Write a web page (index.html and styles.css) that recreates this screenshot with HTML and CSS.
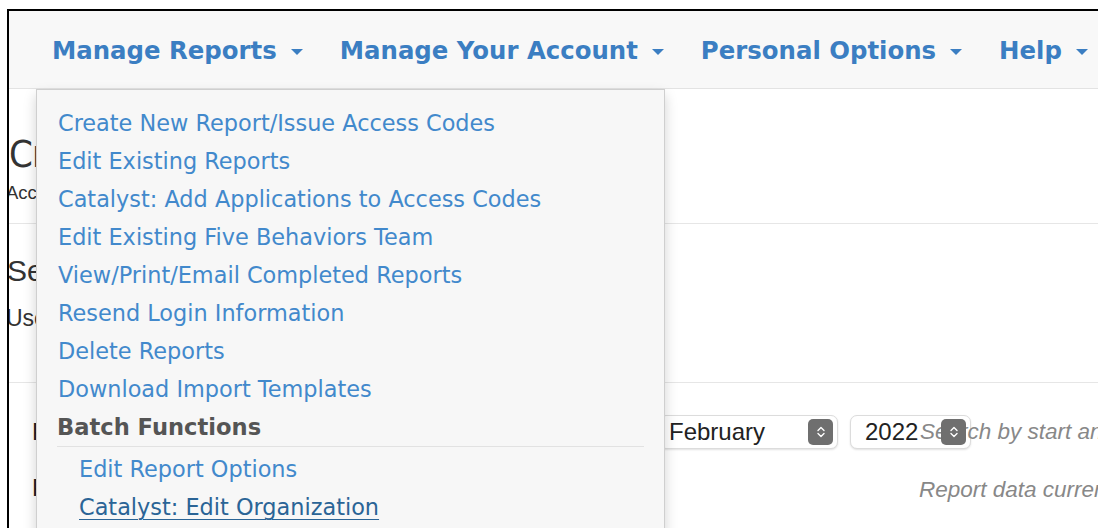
FILE: index.html
```html
<!DOCTYPE html>
<html lang="en">
<head>
<meta charset="utf-8">
<title>Manage Reports</title>
<link rel="stylesheet" href="styles.css">
</head>
<body>
<div class="frame">
  <nav class="navbar">
    <a class="nav-link">Manage Reports <span class="caret"></span></a>
    <a class="nav-link">Manage Your Account <span class="caret"></span></a>
    <a class="nav-link">Personal Options <span class="caret"></span></a>
    <a class="nav-link">Help <span class="caret"></span></a>
  </nav>

  <main class="content">
    <section class="intro">
      <h1 class="page-title">Create New Report</h1>
      <p class="page-sub">Access codes and report options</p>
    </section>

    <section class="search-intro">
      <h2 class="section-title">Search Reports</h2>
      <p class="section-sub">Use the fields below to find a report</p>
    </section>

    <section class="filters">
      <div class="field-row">
        <span class="field-label">Period Start</span>
        <div class="select wide">
          <span class="select-value">February</span>
          <span class="select-arrows"><svg viewBox="0 0 10 14" width="10" height="14"><path d="M2 5.5 L5 2.5 L8 5.5 M2 8.5 L5 11.5 L8 8.5" fill="none" stroke="#fff" stroke-width="1.4" stroke-linecap="round" stroke-linejoin="round"/></svg></span>
        </div>
        <div class="select narrow">
          <span class="select-value">2022</span>
          <span class="select-arrows"><svg viewBox="0 0 10 14" width="10" height="14"><path d="M2 5.5 L5 2.5 L8 5.5 M2 8.5 L5 11.5 L8 8.5" fill="none" stroke="#fff" stroke-width="1.4" stroke-linecap="round" stroke-linejoin="round"/></svg></span>
        </div>
        <span class="hint overlap">Search by start and end date</span>
      </div>
      <div class="field-row">
        <span class="field-label">Period End</span>
        <span class="hint note">Report data current as of today</span>
      </div>
    </section>
  </main>

  <ul class="dropdown">
    <li><a class="menu-item">Create New Report/Issue Access Codes</a></li>
    <li><a class="menu-item">Edit Existing Reports</a></li>
    <li><a class="menu-item">Catalyst: Add Applications to Access Codes</a></li>
    <li><a class="menu-item">Edit Existing Five Behaviors Team</a></li>
    <li><a class="menu-item">View/Print/Email Completed Reports</a></li>
    <li><a class="menu-item">Resend Login Information</a></li>
    <li><a class="menu-item">Delete Reports</a></li>
    <li><a class="menu-item">Download Import Templates</a></li>
    <li class="menu-header">Batch Functions</li>
    <li class="first-sub"><a class="menu-item sub">Edit Report Options</a></li>
    <li><a class="menu-item sub hover">Catalyst: Edit Organization</a></li>
  </ul>
</div>
</body>
</html>
```

FILE: styles.css
```css
html, body {
  margin: 0;
  padding: 0;
  background: #fff;
}

body {
  width: 1098px;
  height: 528px;
  overflow: hidden;
  font-family: "Liberation Sans", Arial, sans-serif;
  color: #333;
}

.frame {
  position: relative;
  margin: 9px 0 0 7px;
  width: 1200px;
  height: 600px;
  border-top: 2px solid #000;
  border-left: 2px solid #000;
  overflow: hidden;
}

/* top navigation bar */
.navbar {
  height: 77px;
  background: #f8f8f8;
  border-bottom: 1px solid #e3e3e3;
  display: flex;
  align-items: center;
  gap: 37px;
  padding-left: 43px;
}

.nav-link {
  display: flex;
  align-items: center;
  font-family: "DejaVu Sans", Verdana, sans-serif;
  font-weight: bold;
  font-size: 24.4px;
  color: #3b7ec2;
  white-space: nowrap;
  margin-top: 2px;
}

.caret {
  display: inline-block;
  width: 0;
  height: 0;
  margin-left: 14px;
  margin-top: 3px;
  border-left: 6px solid transparent;
  border-right: 6px solid transparent;
  border-top: 6px solid #3b7ec2;
}

/* page body behind the menu */
.content {
  margin-left: -2px;
}

.intro {
  height: 134px;
  border-bottom: 1px solid #e6e6e6;
  overflow: hidden;
}

.page-title {
  margin: 45px 0 0 2px;
  font-family: "Liberation Sans Narrow", "DejaVu Sans Condensed", "Liberation Sans", sans-serif;
  font-size: 38px;
  line-height: 40px;
  font-weight: normal;
  letter-spacing: -1px;
  color: #333;
  white-space: nowrap;
}

.page-sub {
  margin: 8px 0 0 -1px;
  font-size: 18.5px;
  line-height: 21px;
  color: #333;
  white-space: nowrap;
}

.search-intro {
  height: 158px;
  border-bottom: 1px solid #e6e6e6;
  overflow: hidden;
}

.section-title {
  margin: 30px 0 0;
  font-size: 30px;
  line-height: 34px;
  font-weight: normal;
  color: #333;
  white-space: nowrap;
}

.section-sub {
  margin: 17px 0 0 -1px;
  font-size: 23px;
  line-height: 26px;
  color: #333;
  white-space: nowrap;
}

.filters {
  padding-top: 32px;
  display: flex;
  flex-direction: column;
  gap: 22px;
}

.field-row {
  display: flex;
  align-items: center;
  height: 34px;
}

.field-label {
  width: 627px;
  padding-left: 25px;
  flex-shrink: 0;
  font-size: 24px;
  color: #222;
  white-space: nowrap;
}

.select {
  display: flex;
  align-items: center;
  justify-content: space-between;
  height: 34px;
  box-sizing: border-box;
  background: #fff;
  border: 1px solid #dcdcdc;
  border-radius: 7px;
  box-shadow: 0 1px 2px rgba(0, 0, 0, 0.12);
  padding: 0 4px 0 9px;
  flex-shrink: 0;
}

.select.wide {
  width: 179px;
}

.select.narrow {
  width: 121px;
  margin-left: 12px;
  padding-left: 14px;
}

.select-value {
  font-size: 24px;
  color: #222;
}

.select-arrows {
  position: relative;
  z-index: 1;
  width: 25px;
  height: 26px;
  border-radius: 5px;
  background: #6f6f6f;
  display: flex;
  align-items: center;
  justify-content: center;
}

.hint {
  font-style: italic;
  font-size: 22.5px;
  color: #888;
  white-space: nowrap;
}

.hint.overlap {
  margin-left: -51px;
}

.hint.note {
  margin-left: 260px;
  margin-top: 4px;
}

/* open dropdown menu */
.dropdown {
  position: absolute;
  left: 27px;
  top: 78px;
  width: 627px;
  height: 520px;
  margin: 0;
  padding: 14px 0 0;
  list-style: none;
  background: #f7f7f7;
  border: 1px solid #cfcfcf;
  box-shadow: 0 6px 12px rgba(0, 0, 0, 0.18);
  font-family: "DejaVu Sans", Verdana, sans-serif;
  z-index: 5;
}

.menu-item {
  display: block;
  padding-left: 21px;
  font-size: 22.4px;
  line-height: 38px;
  color: #4289cc;
  white-space: nowrap;
}

.menu-item.sub {
  padding-left: 42px;
}

.menu-item.hover {
  color: #2a6496;
  text-decoration: underline;
  text-underline-offset: 4px;
  text-decoration-thickness: 1px;
}

.menu-header {
  margin: 0 20px;
  font-size: 22.6px;
  line-height: 38px;
  font-weight: bold;
  color: #555;
  border-bottom: 1px solid #e2e2e2;
}

.first-sub {
  margin-top: 3px;
}
```
